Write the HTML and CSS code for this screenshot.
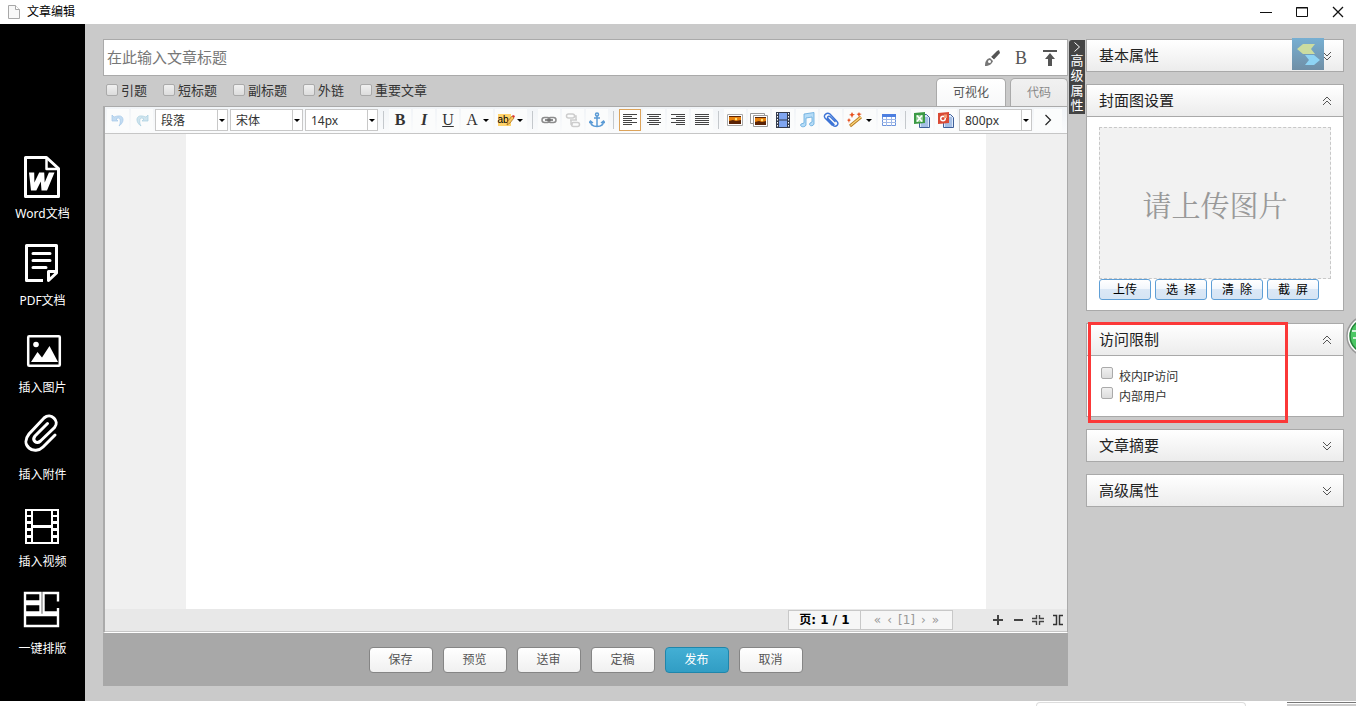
FILE: index.html
```html
<!DOCTYPE html>
<html lang="zh-CN">
<head>
<meta charset="utf-8">
<title>文章编辑</title>
<link rel="stylesheet" href="styles.css">
</head>
<body>
<header class="titlebar">
  <svg class="doc-icon" width="12" height="14" viewBox="0 0 12 14"><path d="M.5.5h7l4 4v9H.5z" fill="#f8f8f8" stroke="#a8a8a8"/><path d="M7.5.5v4h4" fill="#fff" stroke="#a8a8a8"/></svg>
  <h1 class="window-title">文章编辑</h1>
  <div class="window-buttons">
    <button class="window-button" aria-label="最小化"><svg width="12" height="12" viewBox="0 0 12 12"><path d="M0 6.5h12" stroke="#111"/></svg></button>
    <button class="window-button" aria-label="最大化"><svg width="12" height="12" viewBox="0 0 12 12"><path d="M.5 1.5h11v9H.5zM0 2h12" fill="none" stroke="#111"/></svg></button>
    <button class="window-button" aria-label="关闭"><svg width="12" height="12" viewBox="0 0 12 12"><path d="M1 1l10 10M11 1L1 11" stroke="#111" stroke-width="1.3"/></svg></button>
  </div>
</header>

<div class="workspace">
  <nav class="sidebar">
    <button class="side-item">
      <svg width="45" height="48" viewBox="0 0 45 48" fill="none" stroke="#fff" stroke-width="3" stroke-linejoin="round"><path d="M5.500 6.500h21l12 11v28h-33z"/><path d="M26.500 7v11h11.500" stroke-width="2.500"/><path d="M9 21.500h5.200l.2 10 4.800-10h5l.5 10 4.200-10h5.600L27 39.500h-5.500l-.7-9-4.500 9H11z" fill="#fff" stroke="none"/></svg>
      <span>Word文档</span>
    </button>
    <button class="side-item">
      <svg width="45" height="48" viewBox="0 0 45 48" fill="none" stroke="#fff" stroke-width="3"><path d="M23 42.500H6.500v-35h30V35l-8 7.500v-9H37" stroke-linejoin="round"/><path d="M13 15.500h17M13 22.500h17M13 29.500h13" stroke-linecap="round"/></svg>
      <span>PDF文档</span>
    </button>
    <button class="side-item">
      <svg width="45" height="48" viewBox="0 0 45 48" fill="none"><rect x="8.200" y="11.200" width="31.600" height="29.600" rx="1" stroke="#fff" stroke-width="2.500"/><circle cx="16" cy="19.500" r="2.800" fill="#fff"/><path d="M11 37l6.500-10 4.500 5.500L29.500 21 38 37z" fill="#fff"/></svg>
      <span>插入图片</span>
    </button>
    <button class="side-item">
      <svg width="45" height="48" viewBox="0 0 45 48" fill="none" stroke="#fff" stroke-width="3" stroke-linecap="round"><path d="M35 23L23 35c-4 4-10 4.500-14 1s-4-9 0-14L24 6c7-6 16 3 10.500 9.500l-14 13.500c-4 3.500-9-.5-5.500-5l12.500-12.500"/></svg>
      <span>插入附件</span>
    </button>
    <button class="side-item">
      <svg width="45" height="48" viewBox="0 0 45 48"><path d="M5 10h34v35H5z" fill="#fff"/><path d="M13 12h18v14H13zM13 29h18v14H13zM7 12h4v4H7zM7 18h4v4H7zM7 25h4v4H7zM7 32h4v4H7zM7 39h4v4H7zM33 12h4v4h-4zM33 18h4v4h-4zM33 25h4v4h-4zM33 32h4v4h-4zM33 39h4v4h-4z" fill="#000"/></svg>
      <span>插入视频</span>
    </button>
    <button class="side-item">
      <svg width="45" height="48" viewBox="0 0 45 48" fill="none" stroke="#fff" stroke-width="2.400"><path d="M5 7h15.500v8.500H5zM5 18h15.500v8.500H5zM5 29h33v11H5zM38 15.500V7H23.500v19.500H38V22"/></svg>
      <span>一键排版</span>
    </button>
  </nav>

  <main class="stage">
    <section class="editor">
      <div class="title-box">
        <input class="title-input" type="text" placeholder="在此输入文章标题" aria-label="文章标题">
        <button class="title-tool" aria-label="画笔"><svg width="18" height="18" viewBox="0 0 18 18"><path d="M2 17c0-4 1-7 5-8l3 3c-1 3-4 5-8 5z" fill="#777"/><circle cx="6.500" cy="12.500" r="1.500" fill="#fff"/><path d="M8 8l6-6 2-1 1 3-6 6.500z" fill="#555"/><path d="M7.500 8l3 3" stroke="#fff"/></svg></button>
        <button class="title-tool title-bold" aria-label="加粗">B</button>
        <button class="title-tool" aria-label="置顶"><svg width="18" height="18" viewBox="0 0 18 18"><path d="M2 1h14v2H2zM9 4l5 6h-3v7H7v-7H4z" fill="#555"/></svg></button>
      </div>

      <div class="options">
        <div class="option-list">
          <label class="option"><input type="checkbox" class="check">引题</label>
          <label class="option"><input type="checkbox" class="check">短标题</label>
          <label class="option"><input type="checkbox" class="check">副标题</label>
          <label class="option"><input type="checkbox" class="check">外链</label>
          <label class="option"><input type="checkbox" class="check">重要文章</label>
        </div>
        <div class="tabs">
          <button class="tab tab-active">可视化</button>
          <button class="tab">代码</button>
        </div>
      </div>

      <div class="frame">
        <div class="toolbar">
          <button class="tool" aria-label="撤销"><svg width="16" height="16" viewBox="0 0 16 16"><path d="M2 3v6h6L6 7c3-2 5-1 4 5l-1 2c6-4 5-11-1-10-2 0-3 1-4 1z" fill="#c3dcf2" stroke="#a3c7e8" stroke-width=".7"/></svg></button>
          <button class="tool" aria-label="重做"><svg width="16" height="16" viewBox="0 0 16 16"><path d="M14 3v6H8l2-2C7 5 5 6 6 12l1 2C1 10 2 3 8 4c2 0 3 1 4 1z" fill="#cfe4ee" stroke="#a8cfe0" stroke-width=".7"/></svg></button>
          <span class="combo"><select aria-label="段落格式"><option>段落</option></select></span>
          <span class="combo"><select aria-label="字体"><option>宋体</option></select></span>
          <span class="combo"><select aria-label="字号"><option>14px</option></select></span>
          <span class="sep"></span>
          <button class="tool letter bold" aria-label="加粗">B</button>
          <button class="tool letter bold italic" aria-label="斜体">I</button>
          <button class="tool letter underline" aria-label="下划线">U</button>
          <button class="tool wide letter" aria-label="字体颜色"><span class="face">A</span><span class="caret"></span></button>
          <button class="tool wide" aria-label="背景颜色"><span class="face highlight">ab<svg class="pencil" width="9" height="12" viewBox="0 0 9 12"><path d="M1 11l1-4 4-5 2 2-4 5z" fill="#f6c65d" stroke="#a56a17" stroke-width=".7"/><path d="M6 2l1-1 2 1-1 2z" fill="#d33"/></svg></span><span class="caret"></span></button>
          <span class="sep"></span>
          <button class="tool" aria-label="超链接"><svg width="16" height="16" viewBox="0 0 16 16" fill="none" stroke="#8c8c8c" stroke-width="1.500"><rect x="1" y="5.500" width="8" height="5" rx="2.500"/><rect x="7" y="5.500" width="8" height="5" rx="2.500"/><path d="M4 8h8" stroke="#666"/></svg></button>
          <button class="tool" aria-label="取消链接"><svg width="16" height="16" viewBox="0 0 16 16" fill="none" stroke="#cdcdcd" stroke-width="1.500"><rect x="1.500" y="2" width="8" height="4" rx="2"/><rect x="6.500" y="10.500" width="8" height="4" rx="2"/><path d="M9 4h2v4H6v4h2M5 8h7"/></svg></button>
          <button class="tool" aria-label="锚点"><svg width="16" height="16" viewBox="0 0 16 16" fill="none" stroke="#5b9bd5" stroke-width="1.500"><circle cx="8" cy="2.500" r="1.500"/><path d="M8 4v10.500M5 6h6M1.500 9c0 4 3 5.500 6.500 5.500s6.500-1.500 6.500-5.500M0 11l1.500-2L4 11M12 11l2.500-2 1.500 2"/></svg></button>
          <span class="sep"></span>
          <button class="tool pressed" aria-label="左对齐"><svg width="16" height="14" viewBox="0 0 16 14" stroke="#444"><path d="M1 1.500h14M1 3.500h9M1 5.500h14M1 7.500h9M1 9.500h14M1 11.500h9"/></svg></button>
          <button class="tool" aria-label="居中对齐"><svg width="16" height="14" viewBox="0 0 16 14" stroke="#444"><path d="M1 1.500h14M3 3.500h10M1 5.500h14M3 7.500h10M1 9.500h14M3 11.500h10"/></svg></button>
          <button class="tool" aria-label="右对齐"><svg width="16" height="14" viewBox="0 0 16 14" stroke="#444"><path d="M1 1.500h14M6 3.500h9M1 5.500h14M6 7.500h9M1 9.500h14M6 11.500h9"/></svg></button>
          <button class="tool" aria-label="两端对齐"><svg width="16" height="14" viewBox="0 0 16 14" stroke="#444"><path d="M1 1.500h14M1 3.500h14M1 5.500h14M1 7.500h14M1 9.500h14M1 11.500h14"/></svg></button>
          <span class="sep"></span>
          <button class="tool" aria-label="图片"><svg width="16" height="16" viewBox="0 0 16 16"><path d="M.5 2.500h15v11H.5z" fill="#fff" stroke="#aaa"/><path d="M2 4h12v8H2z" fill="#e8820c"/><path d="M2 9l4-1 3 1 5-1v4H2zM2 4h12v1H2z" fill="#5a2305"/><circle cx="9" cy="7" r="1.200" fill="#ffe27a"/></svg></button>
          <button class="tool" aria-label="多图"><svg width="18" height="16" viewBox="0 0 18 16"><path d="M.5 1.500h14v10H.5z" fill="#fff" stroke="#999"/><path d="M3.500 3.500h14v11h-14z" fill="#fff" stroke="#999"/><path d="M5 5h11v8H5z" fill="#e8820c"/><path d="M5 10l4-1 3 1 4-1v4H5zM5 5h11v1H5z" fill="#5a2305"/><circle cx="12" cy="8" r="1.200" fill="#ffe27a"/></svg></button>
          <button class="tool" aria-label="视频"><svg width="16" height="16" viewBox="0 0 16 16"><path d="M1 0h14v16H1z" fill="#333b4d"/><path d="M4 1h8v6.500H4zM4 8.500h8V15H4z" fill="#7fa5f0"/><path d="M2.500 1v15M13.500 1v15" stroke="#fff" stroke-dasharray="1.500 1.500"/></svg></button>
          <button class="tool" aria-label="音乐"><svg width="16" height="16" viewBox="0 0 16 16"><path d="M5 2l10-1.500V12c-1 3-6 2-4-1l2-1V5L7 6v7c-1 3-7 2-5-1l3-1z" fill="#b5dcf7" stroke="#62a8dc" stroke-width=".8"/></svg></button>
          <button class="tool" aria-label="附件"><svg width="16" height="16" viewBox="0 0 16 16" fill="none" stroke="#3d74d6" stroke-width="1.400" stroke-linecap="round"><path d="M4 7l6 6.500c3 2 6.500-1 4-4L7 2C4 0 0 3 2 6l7 7M12 9.500L7 4.500c-2-1-3 1-2 2l6 6"/></svg></button>
          <button class="tool wide" aria-label="自动排版"><span class="face"><svg width="16" height="16" viewBox="0 0 16 16"><path d="M3 14L14 5" stroke="#b7791f" stroke-width="3"/><path d="M3.500 13.500L14 5" stroke="#f9d47a" stroke-width="1.400"/><path d="M5 0l1 2 2 .5-2 1L5 6 4 3.500 2 3l2-1zM12 0l.8 1.500 2 .5-2 1L12 5l-1-2-1.500-1 1.700-.5zM2 6l.7 1.500L4 8l-1.500 1L2 11l-.7-2L0 8l1.300-.5z" fill="#e8501e"/></svg></span><span class="caret"></span></button>
          <button class="tool" aria-label="表格"><svg width="16" height="16" viewBox="0 0 16 16"><path d="M1.500 2.500h13v11h-13z" fill="#fff" stroke="#6d94dc"/><path d="M1 2h14v3H1z" fill="#4d7fe0"/><path d="M1 7.500h14M1 10.500h14M5.500 5v9M10.500 5v9" stroke="#9fb9e8"/></svg></button>
          <span class="sep"></span>
          <button class="tool" aria-label="导入 Excel"><svg width="16" height="16" viewBox="0 0 16 16"><path d="M5.500 2.500h7l3 3v10h-10z" fill="#dbe8fa" stroke="#3e5f98"/><path d="M7 6h7M7 8h7M7 10h7M7 12h7M7 14h7" stroke="#6e95cf"/><path d="M0 1l11-1v11L0 12z" fill="#3c9a45"/><path d="M2 3h7v7H2z" fill="#8cca8f"/><path d="M3 3.500l5 6M8 3.500l-5 6" stroke="#fff" stroke-width="1.600"/></svg></button>
          <button class="tool" aria-label="导入 PPT"><svg width="16" height="16" viewBox="0 0 16 16"><path d="M5.500 2.500h7l3 3v10h-10z" fill="#dbe8fa" stroke="#3e5f98"/><path d="M7 6h7M7 8h7M7 10h7M7 12h7M7 14h7" stroke="#6e95cf"/><path d="M0 1l11-1v11L0 12z" fill="#d94a35"/><circle cx="5" cy="6.500" r="3" fill="#fff"/><circle cx="5" cy="6.500" r="1.500" fill="#d94a35"/><path d="M6 6V2.500h3V6z" fill="#f3a07a"/></svg></button>
          <span class="combo"><select aria-label="页面宽度"><option>800px</option></select></span>
          <button class="tool more" aria-label="更多"><svg width="8" height="12" viewBox="0 0 8 12"><path d="M1.500 1l5 5-5 5" fill="none" stroke="#222" stroke-width="1.200"/></svg></button>
        </div>
        <div class="canvas"><div class="paper" contenteditable="true" aria-label="正文"></div></div>
        <div class="status">
          <div class="pager">
            <span class="page-count">页: 1 / 1</span>
            <span class="page-links"><span>«</span><span>‹</span><span>[1]</span><span>›</span><span>»</span></span>
          </div>
          <div class="zoom-tools">
            <button class="zoom-tool" aria-label="放大"><svg width="12" height="12" viewBox="0 0 12 12"><path d="M1 6h10M6 1v10" stroke="#444" stroke-width="2"/></svg></button>
            <button class="zoom-tool" aria-label="缩小"><svg width="12" height="12" viewBox="0 0 12 12"><path d="M2 6h9" stroke="#444" stroke-width="2"/></svg></button>
            <button class="zoom-tool" aria-label="还原"><svg width="12" height="12" viewBox="0 0 12 12"><path d="M0 4.500h4.500V1M7.500 1v3.500H12M0 7.500h4.500V11M12 7.500H7.500V11" fill="none" stroke="#444" stroke-width="1.400"/></svg></button>
            <button class="zoom-tool" aria-label="适应宽度"><svg width="12" height="12" viewBox="0 0 12 12"><path d="M1 1.500h3.500v9H1M11 1.500H7.500v9H11" fill="none" stroke="#333" stroke-width="1.500"/></svg></button>
          </div>
        </div>
      </div>

      <footer class="actions">
        <button class="action">保存</button>
        <button class="action">预览</button>
        <button class="action">送审</button>
        <button class="action">定稿</button>
        <button class="action action-primary">发布</button>
        <button class="action">取消</button>
      </footer>
    </section>

    <button class="drawer-handle"><svg width="8" height="12" viewBox="0 0 8 12"><path d="M1.500 1.500L6.500 6l-5 4.500" fill="none" stroke="#fff"/></svg><span>高级属性</span></button>

    <aside class="properties">
      <section class="card">
        <h2 class="card-head">基本属性<svg class="chevron" width="10" height="10" viewBox="0 0 10 10"><path d="M1 1l4 4 4-4M1 5l4 4 4-4"/></svg></h2>
        <svg class="float-logo" width="32" height="32" viewBox="0 0 32 32"><defs><linearGradient id="tile" x2="0" y2="1"><stop stop-color="#77afd2"/><stop offset="1" stop-color="#708fa6"/></linearGradient></defs><path d="M0 0h32v32H0z" fill="url(#tile)"/><path d="M11 6h12l-4 5 4 5H11l-6-5z" fill="#cbdca0"/><path d="M13 17h9l6 5-6 5H13l4-5z" fill="#8ed4f4"/></svg>
      </section>

      <section class="card">
        <h2 class="card-head">封面图设置<svg class="chevron" width="10" height="10" viewBox="0 0 10 10"><path d="M1 5l4-4 4 4M1 9l4-4 4 4"/></svg></h2>
        <div class="card-body">
          <div class="cover">请上传图片</div>
          <div class="cover-buttons">
            <button class="cover-button">上传</button>
            <button class="cover-button">选&ensp;择</button>
            <button class="cover-button">清&ensp;除</button>
            <button class="cover-button">截&ensp;屏</button>
          </div>
        </div>
      </section>

      <section class="card">
        <h2 class="card-head">访问限制<svg class="chevron" width="10" height="10" viewBox="0 0 10 10"><path d="M1 5l4-4 4 4M1 9l4-4 4 4"/></svg></h2>
        <div class="card-body access">
          <label class="access-row"><input type="checkbox" class="check">校内IP访问</label>
          <label class="access-row"><input type="checkbox" class="check">内部用户</label>
        </div>
        <div class="marker"></div>
      </section>

      <section class="card">
        <h2 class="card-head">文章摘要<svg class="chevron" width="10" height="10" viewBox="0 0 10 10"><path d="M1 1l4 4 4-4M1 5l4 4 4-4"/></svg></h2>
      </section>

      <section class="card">
        <h2 class="card-head">高级属性<svg class="chevron" width="10" height="10" viewBox="0 0 10 10"><path d="M1 1l4 4 4-4M1 5l4 4 4-4"/></svg></h2>
      </section>
    </aside>
  </main>
</div>

<div class="desk-edge"><span class="edge-card"></span><span class="edge-window"></span></div>
<svg class="side-badge" width="10" height="48" viewBox="0 0 10 48"><circle cx="21" cy="22" r="20" fill="#fff" stroke="#999" stroke-width="1.500"/><circle cx="21" cy="22" r="17" fill="#4cc764" stroke="#25803a" stroke-width="1.500"/><path d="M6 17h4M7 24h3" stroke="#fff" stroke-width="1.500"/></svg>
</body>
</html>
```
FILE: styles.css
```css
* { box-sizing: border-box; }

body {
  margin: 0;
  height: 100vh;
  display: flex;
  flex-direction: column;
  overflow: hidden;
  position: relative;
  background: #fff;
  color: #333;
  font: 12px/20px "Noto Sans", "Noto Sans CJK SC", sans-serif;
}

button, input, select { font: inherit; color: inherit; margin: 0; }
button { padding: 0; border: 0; background: none; cursor: pointer; }
svg { display: block; flex: none; }
h1, h2 { margin: 0; font-weight: 400; }

.titlebar {
  height: 24px;
  flex: none;
  display: flex;
  align-items: center;
  padding: 0 12px 0 8px;
}
.window-title { margin-left: 7px; font-size: 12px; color: #000; }
.window-buttons { margin-left: auto; display: flex; gap: 24px; }
.window-button { width: 12px; }

.workspace { flex: 1; display: flex; min-height: 0; }

.sidebar {
  width: 85px;
  flex: none;
  background: #000;
  padding-top: 127px;
  display: flex;
  flex-direction: column;
  gap: 14px;
}
.side-item {
  display: flex;
  flex-direction: column;
  align-items: center;
  gap: 5px;
  color: #fff;
}

.stage {
  flex: 1;
  min-width: 0;
  display: flex;
  background: #cacaca;
  padding: 15px 12px 15px 18px;
}

.editor { flex: 1; min-width: 0; display: flex; flex-direction: column; }

.title-box {
  height: 37px;
  flex: none;
  display: flex;
  align-items: center;
  gap: 11px;
  padding: 0 8px 0 3px;
  background: #fff;
  border: 1px solid #aaa;
}
.title-input {
  flex: 1;
  min-width: 0;
  border: 0;
  padding: 0 0 2px;
  outline: 0;
  background: none;
  font-size: 15px;
  line-height: 24px;
}
.title-input::placeholder { color: #777; opacity: 1; }
.title-tool { width: 18px; display: flex; justify-content: center; }
.title-bold { font: 18px/20px "Liberation Serif", serif; color: #555; }

.options {
  height: 30px;
  flex: none;
  display: flex;
  justify-content: space-between;
  align-items: flex-end;
}
.option-list { align-self: center; display: flex; gap: 16px; padding: 0 0 2px 3px; }
.option { display: flex; align-items: center; gap: 3px; font-size: 13px; color: #333; }

.check {
  appearance: none;
  width: 12px;
  height: 12px;
  border: 1px solid #aaa;
  border-radius: 2px;
  background: linear-gradient(#f0f0f0, #dcdcdc);
}
.check:checked { background: #39a5d0; }

.tabs { display: flex; gap: 4px; }
.tab {
  width: 58px;
  height: 28px;
  padding-top: 1px;
  border: 1px solid #aaa;
  border-bottom: 0;
  border-radius: 5px 5px 0 0;
  background: linear-gradient(#f1f1f1, #e9e9e9);
  color: #888;
}
.tab-active { width: 70px; background: linear-gradient(#fff, #f7f8f9); color: #555; }

.frame {
  flex: 1;
  min-height: 0;
  display: flex;
  flex-direction: column;
  border: 1px solid #aaa;
  border-left-width: 2px;
  border-bottom-color: #fff;
}
.toolbar {
  height: 27px;
  flex: none;
  display: flex;
  align-items: center;
  gap: 2px;
  padding-left: 2px;
  background: linear-gradient(#f1f4f7, #fafbfc);
  border-bottom: 1px solid #c6c6c6;
}
.tool {
  width: 22px;
  height: 22px;
  flex: none;
  display: flex;
  align-items: center;
  justify-content: center;
  background: #fbfcfc;
}
.wide { width: 32px; justify-content: flex-start; }
.face { width: 22px; display: flex; align-items: center; justify-content: center; }
.caret { border: 3px solid transparent; border-top-color: #000; border-bottom: 0; }
.pressed { border: 1px solid #dca35a; background: #fff; }
.more { width: 28px; }
.letter { font: 16px/20px "Liberation Serif", serif; color: #333; }
.bold { font-weight: 700; }
.italic { font-style: italic; }
.underline { text-decoration: underline; }
.highlight { font: 10px/12px "Liberation Sans", sans-serif; color: #000; }
.highlight { background: linear-gradient(#ffd36b, #ffd36b) 3px 0 / 13px 12px no-repeat; }
.pencil { margin-left: -3px; }

.sep { width: 7px; height: 18px; flex: none; padding: 0 3px; background: #c4c8cc content-box; }

.combo {
  position: relative;
  width: 73px;
  height: 22px;
  flex: none;
  border: 1px solid #c8c8c8;
  background: #fff;
}
.combo select {
  appearance: none;
  width: 100%;
  height: 20px;
  border: 0;
  padding: 1px 12px 0 5px;
  outline: 0;
  background: none;
}
.combo::before {
  content: "";
  position: absolute;
  right: 9px;
  top: 0;
  bottom: 0;
  border-left: 1px solid #c8c8c8;
}
.combo::after {
  content: "";
  position: absolute;
  right: 2px;
  top: 9px;
  border: 3px solid transparent;
  border-top-color: #000;
  border-bottom: 0;
  pointer-events: none;
}

.canvas { flex: 1; min-height: 0; display: flex; justify-content: center; background: #f0f0f0; }
.paper { width: 800px; background: #fff; outline: 0; }

.status {
  height: 23px;
  flex: none;
  display: flex;
  align-items: center;
  justify-content: flex-end;
  gap: 39px;
  padding-right: 3px;
  background: #e8e8e8;
  border-bottom: 1px solid #c6c6c6;
}
.pager {
  display: flex;
  height: 20px;
  border: 1px solid #c8c8c8;
  background: #f6f6f6;
  line-height: 19px;
  text-align: center;
}
.page-count {
  width: 72px;
  border-right: 1px solid #c8c8c8;
  color: #000;
  font-family: "DejaVu Sans", "Noto Sans CJK SC", sans-serif;
  font-weight: 700;
}
.page-links {
  width: 91px;
  display: flex;
  justify-content: center;
  gap: 6px;
  color: #999;
  font-family: "DejaVu Sans", sans-serif;
}
.zoom-tools { display: flex; gap: 8px; padding-bottom: 1px; }
.zoom-tool { width: 12px; }

.actions {
  height: 53px;
  flex: none;
  display: flex;
  justify-content: center;
  align-items: center;
  gap: 10px;
  background: #a8a8a8;
}
.action {
  width: 64px;
  height: 26px;
  padding-top: 1px;
  border: 1px solid #858585;
  border-radius: 4px;
  background: linear-gradient(#fff, #f0f0f0);
  color: #555;
}
.action-primary { border-color: #1f86ab; background: linear-gradient(#43afd4, #319dc4); color: #fff; }

.drawer-handle {
  align-self: flex-start;
  width: 16px;
  margin: 1px 1px 0;
  padding: 1px 0;
  display: flex;
  flex-direction: column;
  align-items: center;
  border-radius: 3px 0 0 0;
  background: #444;
  color: #fff;
  font-size: 13px;
  line-height: 15px;
}
.drawer-handle span { width: 13px; word-break: break-all; }

.properties { width: 258px; flex: none; display: flex; flex-direction: column; gap: 12px; }
.card { position: relative; flex: none; border: 1px solid #a9a9a9; background: #fff; }
.card-head {
  height: 31px;
  display: flex;
  align-items: center;
  justify-content: space-between;
  padding: 0 11px 2px 12px;
  background: linear-gradient(#fff, #ececec);
  font-size: 15px;
  color: #222;
}
.chevron { margin-top: 2px; fill: none; stroke: #555; stroke-width: 1; }
.card-body { border-top: 1px solid #a9a9a9; padding: 10px 12px; }

.cover {
  height: 152px;
  display: flex;
  align-items: center;
  justify-content: center;
  padding-top: 4px;
  border: 1px dashed #c8c8c8;
  background: #f2f2f2;
  color: #999;
  font: 29px/40px "Noto Serif CJK SC", "Noto Sans CJK SC", serif;
}
.cover-buttons { display: flex; gap: 4px; }
.cover-button {
  width: 52px;
  height: 21px;
  border: 1px solid #5f9fd6;
  border-radius: 3px;
  background: linear-gradient(#fff, #f1f6fc 50%, #dbe8f6 50%, #d5e4f4);
  color: #000;
  line-height: 18px;
}

.access { padding: 11px 14px 9px; }
.access-row { display: flex; align-items: flex-start; gap: 6px; }
.marker {
  position: absolute;
  left: 1px;
  top: -2px;
  width: 200px;
  height: 101px;
  border: 3px solid #fb3838;
  pointer-events: none;
}
.float-logo { position: absolute; right: 19px; top: -2px; }

.desk-edge {
  height: 5px;
  flex: none;
  display: flex;
  justify-content: flex-end;
  gap: 41px;
  padding-top: 1px;
}
.edge-card { width: 210px; border: 1px solid #ddd; border-bottom: 0; border-radius: 4px 4px 0 0; }
.edge-window { width: 69px; border-top: 1px solid #777; background: linear-gradient(#fff 1px, #ccc 1px); }

.side-badge { position: absolute; right: 0; top: 314px; overflow: hidden; }
```
